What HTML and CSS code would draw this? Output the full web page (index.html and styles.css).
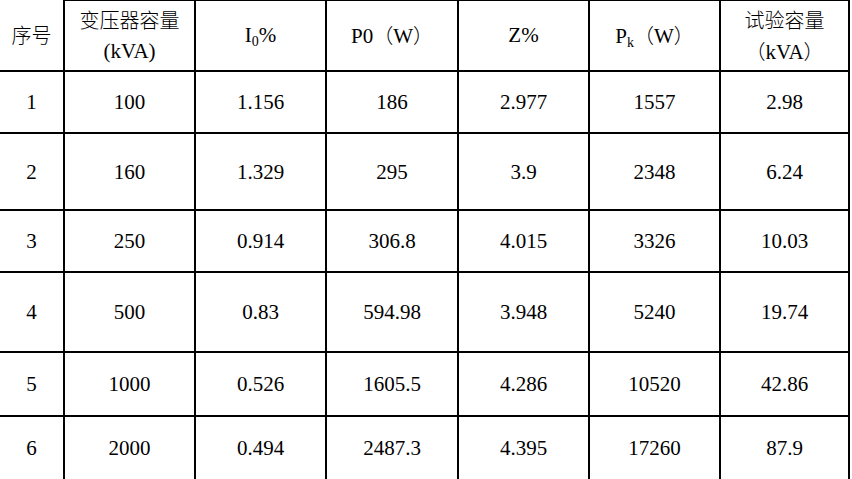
FILE: index.html
```html
<!DOCTYPE html>
<html lang="zh">
<head>
<meta charset="utf-8">
<title>变压器试验容量</title>
<link rel="stylesheet" href="styles.css">
</head>
<body>
<div class="table">
  <div class="cell head first"><span class="zh">序号</span></div>
  <div class="cell head two"><span class="zh">变压器容量</span><br>(kVA)</div>
  <div class="cell head">I<sub>0</sub>%</div>
  <div class="cell head">P0<span class="zh">（</span>W<span class="zh">）</span></div>
  <div class="cell head">Z%</div>
  <div class="cell head">P<sub>k</sub><span class="zh">（</span>W<span class="zh">）</span></div>
  <div class="cell head two"><span class="zh">试验容量</span><br><span class="zh">（</span>kVA<span class="zh">）</span></div>

  <div class="cell">1</div><div class="cell">100</div><div class="cell">1.156</div><div class="cell">186</div><div class="cell">2.977</div><div class="cell">1557</div><div class="cell">2.98</div>
  <div class="cell">2</div><div class="cell">160</div><div class="cell">1.329</div><div class="cell">295</div><div class="cell">3.9</div><div class="cell">2348</div><div class="cell">6.24</div>
  <div class="cell">3</div><div class="cell">250</div><div class="cell">0.914</div><div class="cell">306.8</div><div class="cell">4.015</div><div class="cell">3326</div><div class="cell">10.03</div>
  <div class="cell">4</div><div class="cell">500</div><div class="cell">0.83</div><div class="cell">594.98</div><div class="cell">3.948</div><div class="cell">5240</div><div class="cell">19.74</div>
  <div class="cell">5</div><div class="cell">1000</div><div class="cell">0.526</div><div class="cell">1605.5</div><div class="cell">4.286</div><div class="cell">10520</div><div class="cell">42.86</div>
  <div class="cell">6</div><div class="cell">2000</div><div class="cell">0.494</div><div class="cell">2487.3</div><div class="cell">4.395</div><div class="cell">17260</div><div class="cell">87.9</div>
</div>
</body>
</html>
```

FILE: styles.css
```css
html, body {
  margin: 0;
  padding: 0;
  background: #fff;
  overflow: hidden;
}

.table {
  display: grid;
  grid-template-columns: 65px 131px 131px 132px 131px 131px 129px;
  grid-template-rows: 72px 62px 77px 62px 80px 64px 64px;
  font-family: "Liberation Serif", "Times New Roman", Times, serif;
  font-size: 21px;
  color: #000;
}

.cell {
  border-right: 2px solid #000;
  border-bottom: 2px solid #000;
  display: flex;
  align-items: center;
  justify-content: center;
  text-align: center;
  line-height: 30px;
}

.head {
  display: block;
  box-sizing: border-box;
  padding-top: 20px;
  box-shadow: inset 0 1px 0 #000;
}

.head.first {
  box-shadow: none;
}

.head.two {
  padding-top: 5px;
}

.zh {
  font-family: "Noto Sans CJK SC", sans-serif;
  font-weight: 300;
  font-size: 20px;
}

sub {
  font-size: 14px;
  line-height: 0;
  vertical-align: -4px;
}
```
